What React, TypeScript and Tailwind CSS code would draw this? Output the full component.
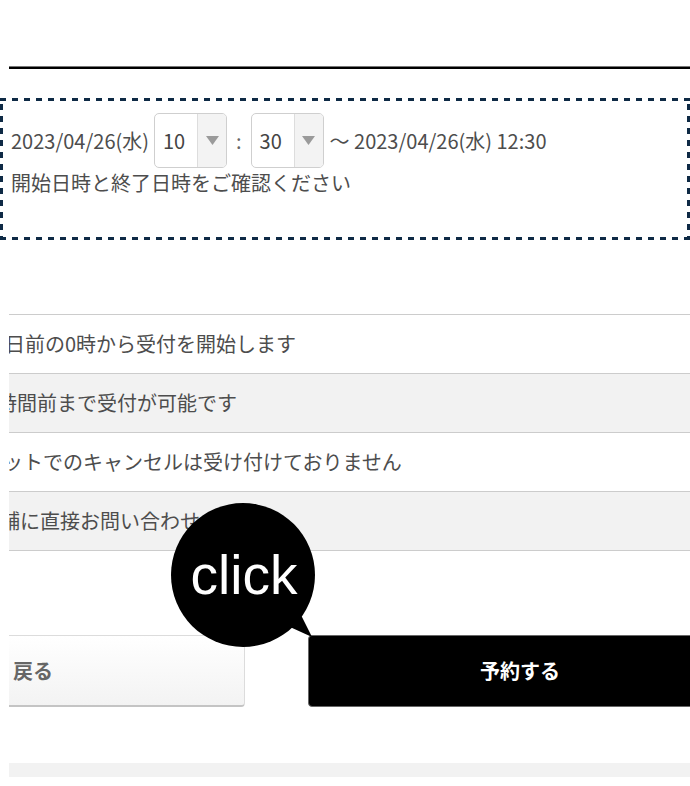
import React from 'react';

const rows = [
  { text: '日前の0時から受付を開始します', shift: '-ml-[4px]', bg: 'bg-white' },
  { text: '時間前まで受付が可能です', shift: '-ml-[12px]', bg: 'bg-[#f2f2f2]' },
  { text: 'ットでのキャンセルは受け付けておりません', shift: '-ml-[6px]', bg: 'bg-white' },
  { text: '舗に直接お問い合わせください', shift: '-ml-[9px]', bg: 'bg-[#f2f2f2]' },
];

const TimeSelect: React.FC<{ value: string }> = ({ value }) => (
  <div className="flex h-[55px] w-[73px] overflow-hidden rounded-[5px] border border-[#cfcfcf] bg-white">
    <div className="flex flex-1 items-center pl-[8px] text-[#444]">{value}</div>
    <div className="flex w-[29px] items-center justify-center border-l border-[#ddd] bg-[#f3f3f3]">
      <svg width="13" height="10" viewBox="0 0 13 10">
        <polygon points="0,0 13,0 6.5,9" fill="#9a9a9a" />
      </svg>
    </div>
  </div>
);

export default function App() {
  return (
    <div className="relative h-[786px] w-[690px] overflow-hidden bg-white font-['Noto_Sans_CJK_JP','Noto_Sans',sans-serif] text-[#4d4d4d]">
      {/* header rule */}
      <div className="ml-[9px] mt-[66px] h-[3px] border-t border-[#777] bg-black" />

      {/* selected date / time, dashed frame */}
      <div className="mt-[29px] h-[142px] bg-[linear-gradient(90deg,#0e2a45_50%,transparent_50%),linear-gradient(90deg,#0e2a45_50%,transparent_50%),linear-gradient(0deg,#0e2a45_50%,transparent_50%),linear-gradient(0deg,#0e2a45_50%,transparent_50%)] p-[3px] pl-[11px] pt-[15px] text-[20px] [background-position:0_0,0_100%,0_0,100%_0] [background-repeat:repeat-x,repeat-x,repeat-y,repeat-y] [background-size:12px_3px,12px_3px,3px_12px,3px_12px]">
        <div className="flex h-[55px] items-center">
          <span>2023/04/26(水)</span>
          <div className="ml-[5px]">
            <TimeSelect value="10" />
          </div>
          <span className="mx-[9px] text-[#666]">:</span>
          <TimeSelect value="30" />
          <span className="ml-[6px]">〜 2023/04/26(水) 12:30</span>
        </div>
        <p className="leading-[30px]">開始日時と終了日時をご確認ください</p>
      </div>

      {/* notes */}
      <div className="ml-[9px] mt-[74px] overflow-hidden border-t border-[#cccccc] text-[20px]">
        {rows.map((r) => (
          <div key={r.text} className={`flex h-[59px] items-center border-b border-[#cccccc] ${r.bg}`}>
            <span className={`whitespace-nowrap ${r.shift}`}>{r.text}</span>
          </div>
        ))}
      </div>

      {/* buttons */}
      <div className="ml-[9px] mt-[84px] flex gap-[63px] overflow-hidden">
        <button className="-ml-[188px] flex h-[72px] w-[424px] shrink-0 items-center justify-center rounded-[4px] border border-b-2 border-[#dcdcdc] border-b-[#c4c4c4] bg-gradient-to-b from-white to-[#f3f3f3] text-[20px] font-bold text-[#666]">
          戻る
        </button>
        <button className="flex h-[72px] w-[424px] shrink-0 items-center justify-center rounded-[4px] border border-[#666] bg-black text-[20px] font-bold text-white">
          予約する
        </button>
      </div>

      <div className="ml-[9px] mt-[56px] h-[14px] bg-[#f2f2f2]" />

      {/* click bubble */}
      <div className="absolute left-[171px] top-[503px] h-[144px] w-[144px]">
        <svg className="absolute left-0 top-0" width="150" height="150" viewBox="0 0 150 150">
          <circle cx="72" cy="72" r="72" fill="#000" />
          <polygon points="112,100 130,112 141,134 119,124" fill="#000" />
        </svg>
        <div className="relative flex h-full w-full items-center justify-center pl-[2px] font-['Liberation_Sans',Arial,sans-serif] text-[55px] leading-none text-white">
          click
        </div>
      </div>
    </div>
  );
}
